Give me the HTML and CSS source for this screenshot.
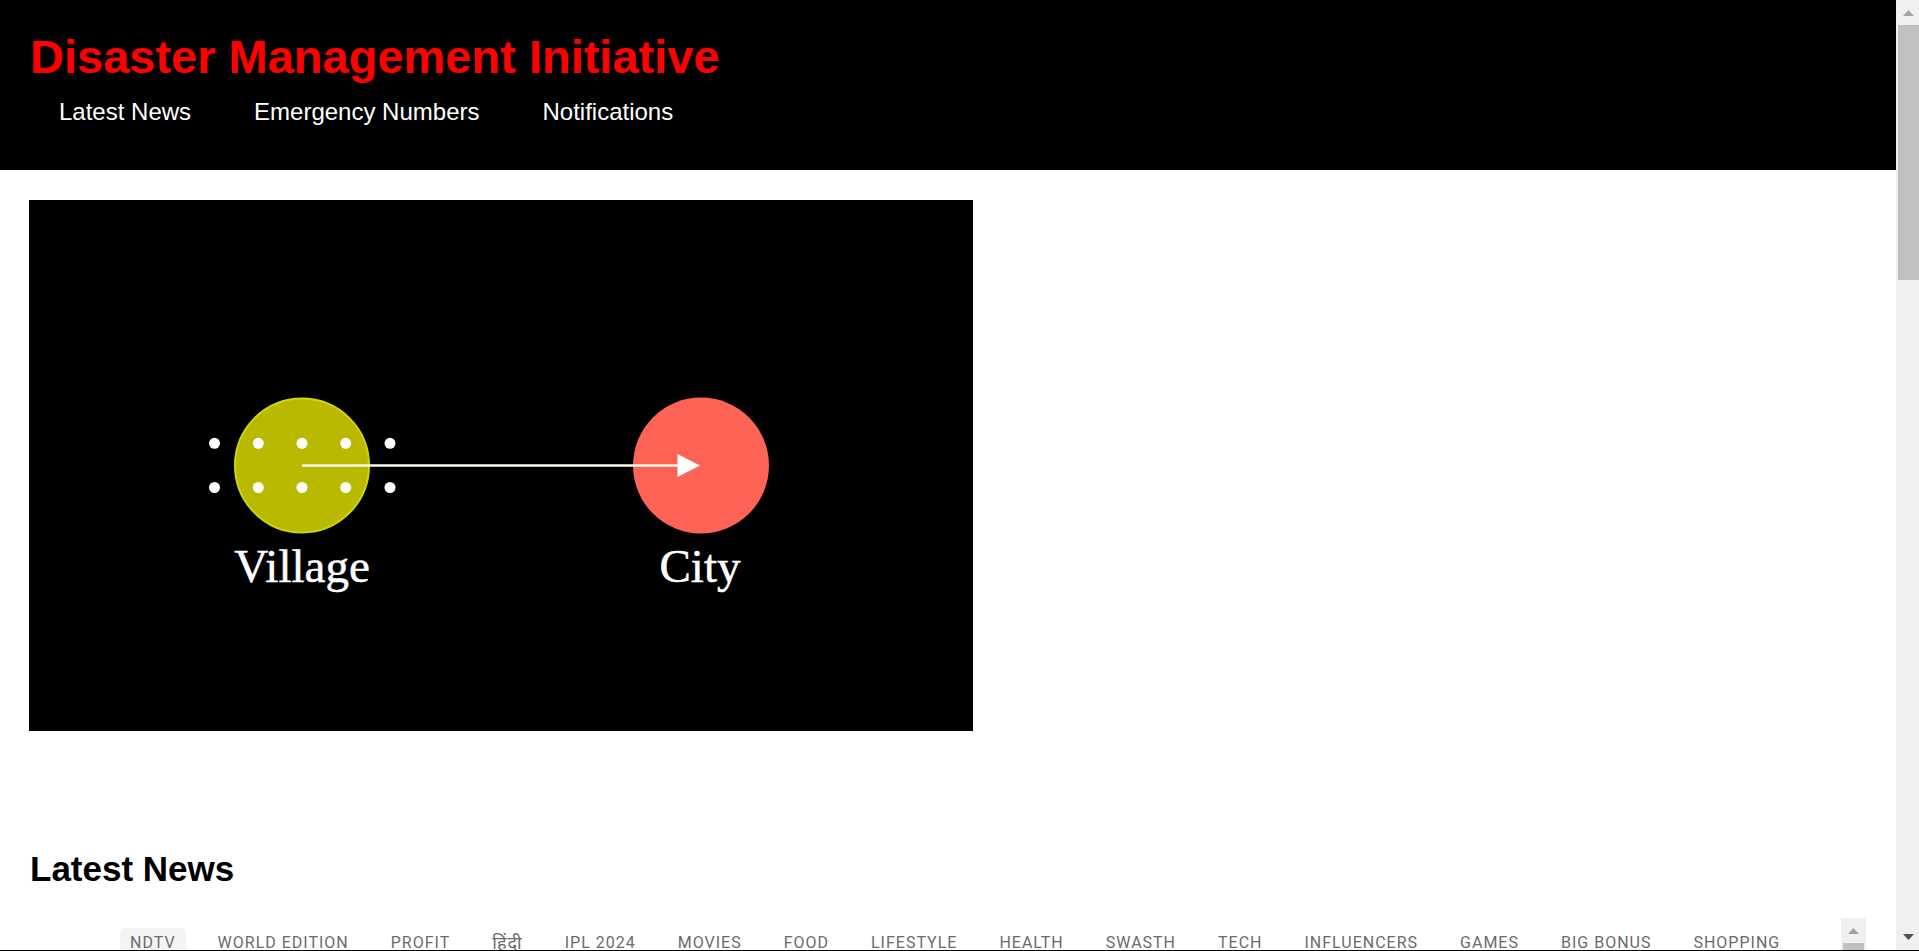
FILE: index.html
```html
<!DOCTYPE html>
<html lang="en">
<head>
<meta charset="utf-8">
<meta name="viewport" content="width=device-width, initial-scale=1">
<title>Disaster Management Initiative</title>
<link rel="stylesheet" href="styles.css">
</head>
<body>
<div class="window">
  <div class="page">
    <header class="site-header">
      <h1 class="site-title">Disaster Management Initiative</h1>
      <nav class="site-nav">
        <a href="#news">Latest News</a>
        <a href="#numbers">Emergency Numbers</a>
        <a href="#notifications">Notifications</a>
      </nav>
    </header>
    <main class="content">
      <svg class="video" viewBox="0 0 944 531" role="img" aria-label="Route from village to city">
        <rect width="944" height="531" fill="#000"/>
        <circle cx="273" cy="265.500" r="67" fill="#b9b900" stroke="#ced60a" stroke-width="2"/>
        <circle cx="672" cy="265.500" r="68" fill="#fd6455"/>
        <g fill="#fff">
          <circle cx="185.500" cy="243.300" r="5.500"/><circle cx="229.300" cy="243.300" r="5.500"/><circle cx="273" cy="243.300" r="5.500"/><circle cx="316.700" cy="243.300" r="5.500"/><circle cx="361" cy="243.300" r="5.500"/>
          <circle cx="185.500" cy="287.500" r="5.500"/><circle cx="229.300" cy="287.500" r="5.500"/><circle cx="273" cy="287.500" r="5.500"/><circle cx="316.700" cy="287.500" r="5.500"/><circle cx="361" cy="287.500" r="5.500"/>
          <path d="M648.500 254v23l22.500-11.500z"/>
        </g>
        <path d="M273 265.500H650" stroke="#fff8ec" stroke-width="2.600"/>
        <text class="place" x="273" y="382">Village</text>
        <text class="place" x="671" y="382">City</text>
      </svg>
      <section class="news" id="news">
        <h2 class="news-title">Latest News</h2>
        <div class="feed">
          <nav class="feed-nav">
            <a class="current" href="#ndtv">NDTV</a>
            <a href="#world">WORLD EDITION</a>
            <a href="#profit">PROFIT</a>
            <a class="hindi" href="#hindi" lang="hi">हिंदी</a>
            <a href="#ipl">IPL 2024</a>
            <a href="#movies">MOVIES</a>
            <a href="#food">FOOD</a>
            <a href="#lifestyle">LIFESTYLE</a>
            <a href="#health">HEALTH</a>
            <a href="#swasth">SWASTH</a>
            <a href="#tech">TECH</a>
            <a href="#influencers">INFLUENCERS</a>
            <a href="#games">GAMES</a>
            <a href="#bonus">BIG BONUS</a>
            <a href="#shopping">SHOPPING</a>
          </nav>
          <div class="scrollbar feed-scrollbar">
            <svg class="arrow" viewBox="0 0 25 25"><path d="M7 16h11l-5.500-6z" fill="#a3a3a3"/></svg>
            <div class="thumb"></div>
          </div>
        </div>
      </section>
    </main>
  </div>
  <div class="scrollbar page-scrollbar">
    <svg class="arrow" viewBox="0 0 25 25"><path d="M7 16h11l-5.500-6z" fill="#a3a3a3"/></svg>
    <div class="thumb"></div>
    <svg class="arrow last" viewBox="0 0 25 25"><path d="M7 9h11l-5.500 6z" fill="#505050"/></svg>
  </div>
</div>
</body>
</html>
```
FILE: styles.css
```css
* { box-sizing: border-box; }

body {
  margin: 0;
  background: #fff;
  color: #000;
  font-family: "Liberation Sans", Arial, sans-serif;
}

.window {
  display: flex;
  height: 100vh;
  overflow: hidden;
  border-bottom: 1px solid #000;
}

.page {
  display: flex;
  flex: 1;
  flex-direction: column;
  min-width: 0;
}

.site-header {
  padding: 30px 30px 44px;
  background: #000;
}

.site-title {
  margin: 0;
  color: #f00;
  font-size: 47px;
  line-height: 54px;
}

.site-nav {
  display: flex;
  gap: 63px;
  padding: 14px 29px 0;
}

.site-nav a {
  color: #fff;
  font-size: 24px;
  line-height: 28px;
  text-decoration: none;
}

.content {
  display: flex;
  flex: 1;
  flex-direction: column;
  min-height: 0;
  padding: 30px 30px 0 29px;
}

.video {
  display: block;
  flex: none;
  width: 100%;
  max-width: 944px;
}

.place {
  fill: #fff;
  stroke: #fff;
  stroke-width: 0.5px;
  font-family: "Liberation Serif", "Times New Roman", serif;
  font-size: 47px;
  text-anchor: middle;
}

.news {
  display: flex;
  flex: 1;
  flex-direction: column;
  min-height: 0;
  padding: 118px 0 0 1px;
}

.news-title {
  margin: 0 0 29px;
  font-size: 35px;
  line-height: 40px;
}

.feed {
  display: flex;
  flex: 1;
  min-height: 0;
  overflow: hidden;
}

.feed-nav {
  display: flex;
  flex: 1;
  gap: 22px;
  align-items: flex-start;
  min-width: 0;
  padding: 10px 0 0 90px;
}

.feed-nav a {
  flex: none;
  padding: 0 10px;
  border-radius: 5px;
  color: #6b6b6b;
  font-family: Roboto, "Noto Sans", sans-serif;
  font-size: 16px;
  letter-spacing: 1px;
  line-height: 30px;
  text-decoration: none;
}

.feed-nav .current { background: #f4f4f4; }

.feed-nav .hindi { font-size: 18px; }

.scrollbar {
  display: flex;
  flex: none;
  flex-direction: column;
  background: #f0f0f0;
}

.arrow {
  flex: none;
  width: 25px;
  height: 25px;
}

.thumb { background: #c1c1c1; }

.page-scrollbar { width: 23px; }

.page-scrollbar .thumb {
  height: 255px;
  margin-left: 2px;
}

.page-scrollbar .last { margin-top: auto; }

.feed-scrollbar { width: 25px; }

.feed-scrollbar .thumb {
  flex: 1;
  margin: 0 2px;
}
```
